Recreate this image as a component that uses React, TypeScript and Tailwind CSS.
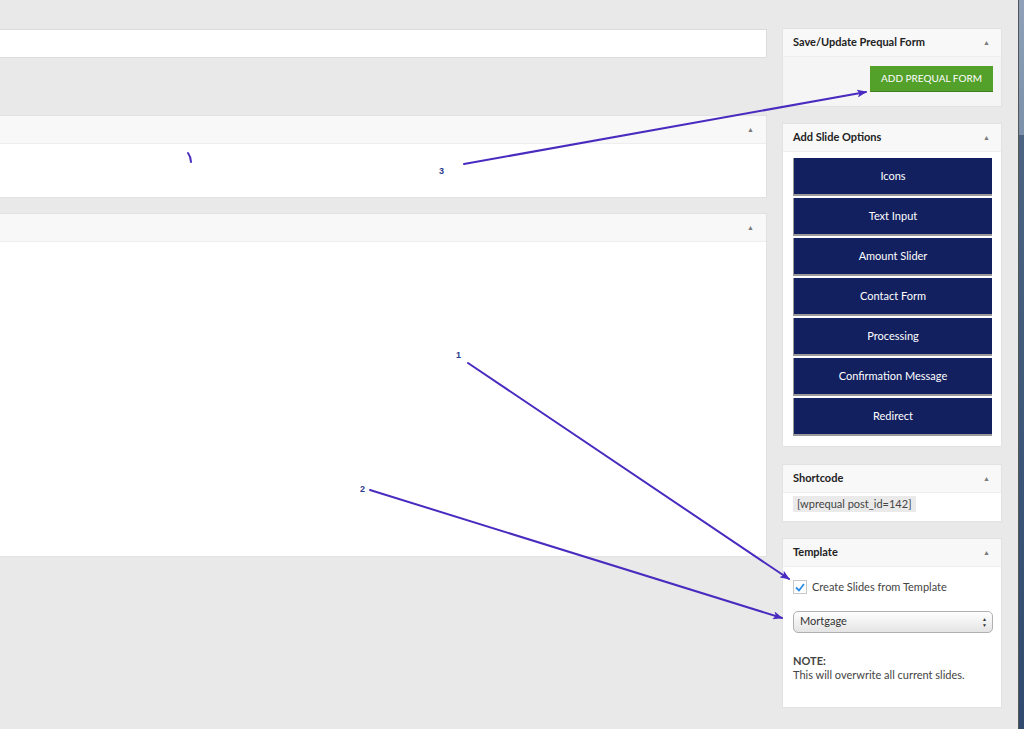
const slideOptions = [
  "Icons",
  "Text Input",
  "Amount Slider",
  "Contact Form",
  "Processing",
  "Confirmation Message",
  "Redirect",
];

function Toggle() {
  return <span className="text-[7px] leading-none text-[#7a7a7a]">▲</span>;
}

function SideBox({ title, children, bodyClass }: { title: string; children: React.ReactNode; bodyClass?: string }) {
  return (
    <div className="border border-[#e2e2e2] bg-white">
      <div className="flex h-[28px] items-center justify-between border-b border-[#eeeeee] bg-[#f8f8f8] pl-[10px] pr-[11px]">
        <span className="text-[11px] font-bold text-[#222]">{title}</span>
        <Toggle />
      </div>
      <div className={bodyClass}>{children}</div>
    </div>
  );
}

function Arrows() {
  return (
    <svg className="pointer-events-none absolute inset-0" width="1024" height="729" viewBox="0 0 1024 729">
      <defs>
        <marker id="head" markerWidth="10" markerHeight="8" refX="9" refY="4" orient="auto" markerUnits="userSpaceOnUse">
          <path d="M0 0 L10 4 L0 8 L2.5 4 Z" fill="#4a2bbf" />
        </marker>
      </defs>
      <g stroke="#4a2bbf" strokeWidth="2" fill="none" strokeLinecap="round">
        <line x1="464" y1="164" x2="866" y2="92" markerEnd="url(#head)" />
        <line x1="468" y1="363" x2="789" y2="579" markerEnd="url(#head)" />
        <line x1="370" y1="490" x2="782" y2="618" markerEnd="url(#head)" />
        <path d="M188 153 Q191 157 191 162" />
      </g>
      <g fill="#2d3a8c" fontFamily="'Liberation Sans', Arial, sans-serif" fontSize="9" fontWeight="bold">
        <text x="439" y="174">3</text>
        <text x="456" y="358">1</text>
        <text x="360" y="492">2</text>
      </g>
    </svg>
  );
}

export default function App() {
  return (
    <div
      className="relative flex h-[729px] w-[1024px] overflow-hidden bg-[#e9e9e9] text-[#333]"
      style={{ fontFamily: "Lato, 'Liberation Sans', Arial, sans-serif" }}
    >
      <div className="flex w-[1018px] shrink-0 pt-[28px]">
        {/* main column */}
        <div className="flex w-[767px] shrink-0 flex-col">
          <div className="mt-[1px] h-[29px] border-y border-r border-[#dcdcdc] bg-white" />
          <div className="mt-[57px] border-y border-r border-[#e2e2e2] bg-white">
            <div className="flex h-[28px] items-center justify-end border-b border-[#eeeeee] bg-[#f8f8f8] pr-[12px]">
              <Toggle />
            </div>
            <div className="h-[53px]" />
          </div>
          <div className="mt-[15px] border-y border-r border-[#e2e2e2] bg-white">
            <div className="flex h-[28px] items-center justify-end border-b border-[#eeeeee] bg-[#f8f8f8] pr-[12px]">
              <Toggle />
            </div>
            <div className="h-[314px]" />
          </div>
        </div>

        {/* sidebar */}
        <div className="ml-[15px] flex w-[220px] shrink-0 flex-col">
          <SideBox title="Save/Update Prequal Form" bodyClass="flex h-[49px] justify-end bg-[#f5f5f5] pr-[8px] pt-[9px]">
            <button className="h-[26px] w-[123px] border-b border-[#3e7d20] bg-[#53a02b] text-[10px] uppercase text-white">
              Add Prequal Form
            </button>
          </SideBox>

          <div className="mt-[16px]">
            <SideBox title="Add Slide Options" bodyClass="flex flex-col gap-[2px] px-[10px] pb-[10px] pt-[6px]">
              {slideOptions.map((label) => (
                <button
                  key={label}
                  className="h-[38px] w-[199px] border-b-2 border-l border-[#9a9a9a] bg-[#13205f] text-[11px] text-white"
                >
                  {label}
                </button>
              ))}
            </SideBox>
          </div>

          <div className="mt-[17px]">
            <SideBox title="Shortcode" bodyClass="flex items-start px-[10px] pb-[9px] pt-[3px]">
              <code
                className="bg-[#eaeaea] px-[4px] py-[1px] text-[11px] leading-[14px] text-[#444]"
                style={{ fontFamily: "Lato, 'Liberation Sans', Arial, sans-serif" }}
              >
                [wprequal post_id=142]
              </code>
            </SideBox>
          </div>

          <div className="mt-[16px]">
            <SideBox title="Template" bodyClass="h-[140px] px-[10px] pt-[12px]">
              <label className="flex items-center gap-[5px] text-[11px] text-[#444]">
                <span className="flex h-[14px] w-[14px] items-center justify-center border border-[#c8c8c8] bg-white">
                  <svg width="10" height="9" viewBox="0 0 10 9">
                    <path d="M1 4.5 L4 7.5 L9 1" stroke="#2a8ce6" strokeWidth="1.8" fill="none" />
                  </svg>
                </span>
                Create Slides from Template
              </label>
              <div className="mt-[15px] flex h-[22px] w-[200px] items-center justify-between rounded-[5px] border border-[#b0b0b0] bg-gradient-to-b from-white to-[#e4e4e4] pl-[6px] pr-[5px] text-[11px] text-[#333]">
                <span>Mortgage</span>
                <span className="flex flex-col text-[5px] leading-[6px] text-[#333]">
                  <span>▲</span>
                  <span>▼</span>
                </span>
              </div>
              <div className="mt-[21px] text-[11px] leading-[14px] text-[#444]">
                <div className="font-bold">NOTE:</div>
                <div>This will overwrite all current slides.</div>
              </div>
            </SideBox>
          </div>
        </div>
      </div>

      {/* window edge and desktop */}
      <div className="w-[1px] shrink-0 bg-[#555]" />
      <div className="flex flex-1 flex-col">
        <div className="h-[135px] bg-gradient-to-b from-[#8ea1b8] to-[#7b90a9]" />
        <div className="flex-1 bg-gradient-to-b from-[#4c6482] to-[#2f4a6e]" />
      </div>

      <Arrows />
    </div>
  );
}
